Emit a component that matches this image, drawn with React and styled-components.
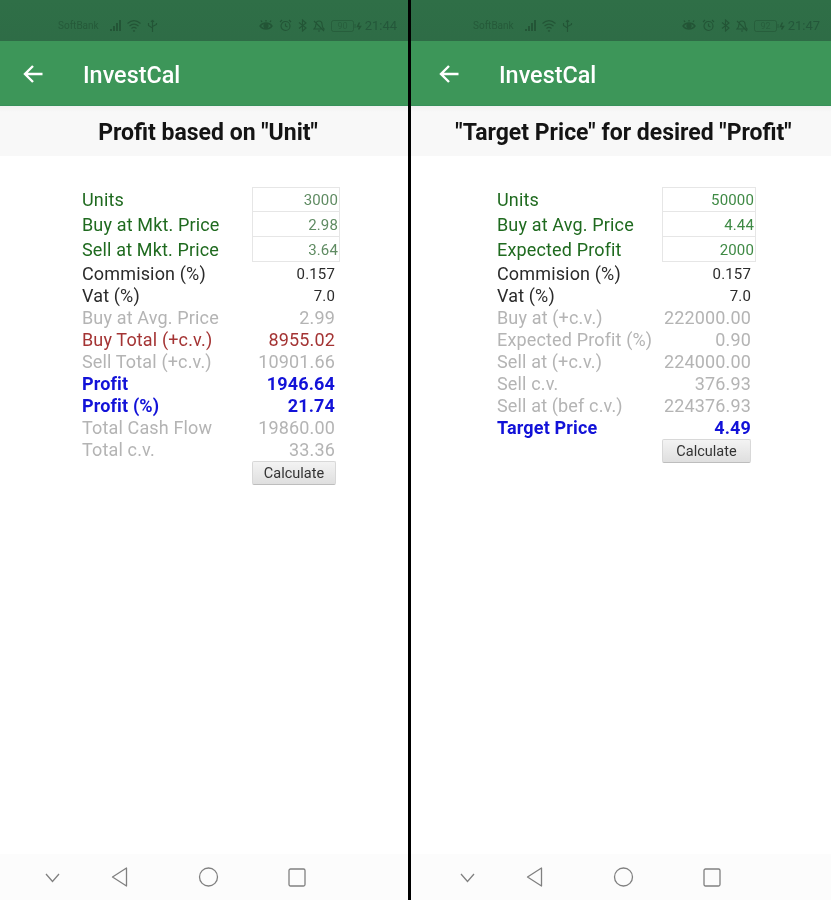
import React from "react";
import styled, { createGlobalStyle } from "styled-components";

const GlobalStyle = createGlobalStyle`
  html, body {
    margin: 0;
    padding: 0;
    height: 100%;
    background: #000;
    font-family: Roboto, "Liberation Sans", sans-serif;
  }
`;

const tones = {
  green: "#1f6a1f",
  black: "#2b2b2b",
  grey: "#b4b4b4",
  red: "#a43434",
  blue: "#1212d8",
};

const screens = [
  {
    width: 408,
    indent: 82,
    statusPad: 58,
    barPad: 23,
    navPad: 45,
    titleShift: 8,
    signal: "SoftBank",
    time: "21:44",
    battery: "90",
    title: 'Profit based on "Unit"',
    labelCol: 170,
    inputCol: 88,
    buttonInset: 4,
    inputColor: "#5f8b62",
    rows: [
      { label: "Units", value: "3000", input: true },
      { label: "Buy at Mkt. Price", value: "2.98", input: true },
      { label: "Sell at Mkt. Price", value: "3.64", input: true },
      { label: "Commision (%)", value: "0.157", tone: "black", small: true },
      { label: "Vat (%)", value: "7.0", tone: "black", small: true },
      { label: "Buy at Avg. Price", value: "2.99", tone: "grey" },
      { label: "Buy Total (+c.v.)", value: "8955.02", tone: "red" },
      { label: "Sell Total (+c.v.)", value: "10901.66", tone: "grey" },
      { label: "Profit", value: "1946.64", tone: "blue", bold: true },
      { label: "Profit (%)", value: "21.74", tone: "blue", bold: true },
      { label: "Total Cash Flow", value: "19860.00", tone: "grey" },
      { label: "Total c.v.", value: "33.36", tone: "grey" },
    ],
  },
  {
    width: 420,
    indent: 86,
    statusPad: 62,
    barPad: 28,
    navPad: 49,
    titleShift: 5,
    signal: "SoftBank",
    time: "21:47",
    battery: "92",
    title: '"Target Price" for desired "Profit"',
    labelCol: 165,
    inputCol: 94,
    buttonInset: 5,
    inputColor: "#3f8a45",
    rows: [
      { label: "Units", value: "50000", input: true },
      { label: "Buy at Avg. Price", value: "4.44", input: true },
      { label: "Expected Profit", value: "2000", input: true },
      { label: "Commision (%)", value: "0.157", tone: "black", small: true },
      { label: "Vat (%)", value: "7.0", tone: "black", small: true },
      { label: "Buy at (+c.v.)", value: "222000.00", tone: "grey" },
      { label: "Expected Profit (%)", value: "0.90", tone: "grey" },
      { label: "Sell at (+c.v.)", value: "224000.00", tone: "grey" },
      { label: "Sell c.v.", value: "376.93", tone: "grey" },
      { label: "Sell at (bef c.v.)", value: "224376.93", tone: "grey" },
      { label: "Target Price", value: "4.49", tone: "blue", bold: true },
    ],
  },
];

const Page = styled.div`
  display: flex;
  justify-content: space-between;
  height: 900px;
  width: 831px;
  overflow: hidden;
  background: #000;
  filter: blur(0.4px);
`;

const Screen = styled.section`
  width: ${(p) => p.$width}px;
  height: 100%;
  display: flex;
  flex-direction: column;
  background: #fff;
`;

const StatusBar = styled.div`
  height: 41px;
  flex: none;
  box-sizing: border-box;
  padding: 10px 11px 0 ${(p) => p.$pad}px;
  display: flex;
  align-items: center;
  background: linear-gradient(#2f6f47, #2e6c46);
  color: #235536;
`;

const Carrier = styled.span`
  font-size: 10px;
  width: 52px;
  opacity: 0.8;
`;

const StatusGroup = styled.div`
  display: flex;
  align-items: center;
  gap: 6px;
`;

const Spacer = styled.div`
  flex: 1;
`;

const Clock = styled.span`
  font-size: 13px;
  margin-left: 2px;
  color: #24573a;
`;

const AppBar = styled.header`
  height: 65px;
  flex: none;
  box-sizing: border-box;
  padding: 2px 0 0 ${(p) => p.$pad}px;
  display: flex;
  align-items: center;
  gap: 40px;
  background: #3d9659;
  border-bottom: 1px solid #37905a;
  color: #fff;
`;

const AppTitle = styled.h1`
  margin: 2px 0 0;
  font-size: 23.4px;
  font-weight: 500;
`;

const TitleBand = styled.h2`
  margin: 0;
  height: 50px;
  flex: none;
  box-sizing: border-box;
  padding: 2px 0 0 ${(p) => p.$shift}px;
  display: flex;
  align-items: center;
  justify-content: center;
  background: linear-gradient(#f1f1f1, #f8f8f8 12%);
  color: #141414;
  font-size: 23px;
  font-weight: 700;
`;

const Form = styled.div`
  padding: 31px 0 0 ${(p) => p.$indent}px;
  display: grid;
  grid-template-columns: ${(p) => p.$labelCol}px ${(p) => p.$inputCol}px;
  font-size: 18px;
  letter-spacing: 0.15px;
`;

const Label = styled.div`
  display: flex;
  align-items: center;
  white-space: nowrap;
  height: ${(p) => (p.$input ? 25 : 22)}px;
  color: ${(p) => tones[p.$tone]};
  font-weight: ${(p) => (p.$bold ? 700 : 400)};
`;

const Value = styled.div`
  display: flex;
  align-items: center;
  justify-content: flex-end;
  height: 22px;
  box-sizing: border-box;
  padding: ${(p) => (p.$small ? "2px 5px 0 0" : "0 5px 0 0")};
  color: ${(p) => tones[p.$tone]};
  font-size: ${(p) => (p.$small ? 15 : 18)}px;
  font-weight: ${(p) => (p.$bold ? 700 : 400)};
`;

const InputBox = styled.div`
  height: 25px;
  box-sizing: border-box;
  display: flex;
  align-items: center;
  justify-content: flex-end;
  padding: 1px 1px 0 0;
  border: 1px solid #e6e6e6;
  border-top-width: ${(p) => (p.$first ? 1 : 0)}px;
  background: #fff;
  color: ${(p) => p.$color};
  font-size: 15px;
`;

const CalcCell = styled.div`
  grid-column: 2;
  padding: 1px ${(p) => p.$inset}px 0 0;
`;

const CalcButton = styled.button`
  display: block;
  width: 100%;
  height: 24px;
  padding: 0;
  border: 1px solid #d8d8d8;
  border-bottom-color: #bdbdbd;
  border-radius: 2px;
  background: linear-gradient(#f3f3f3, #dfdfdf);
  color: #333;
  font-family: inherit;
  font-size: 14.5px;
`;

const NavBar = styled.nav`
  margin-top: auto;
  height: 46px;
  flex: none;
  box-sizing: border-box;
  display: flex;
  align-items: flex-start;
  padding: 13px 0 0 ${(p) => p.$pad}px;
  background: #fcfcfc;
`;

const NavSlot = styled.div`
  display: flex;
  justify-content: center;
  width: ${(p) => p.$w}px;
  margin-right: ${(p) => p.$gap}px;
  padding-top: ${(p) => p.$top || 0}px;
`;

const BackArrow = () => (
  <svg width="20" height="20" viewBox="0 0 20 20" fill="none" stroke="#fff" strokeWidth="2.4">
    <path d="M19.5 10H2M10 2l-8 8 8 8" />
  </svg>
);

const Signal = () => (
  <svg width="11" height="12" viewBox="0 0 11 12" fill="currentColor">
    <rect x="0" y="9" width="2" height="2" />
    <rect x="3" y="6" width="2" height="5" />
    <rect x="6" y="3" width="2" height="8" />
    <rect x="9" y="0" width="2" height="11" />
  </svg>
);

const Wifi = () => (
  <svg width="14" height="12" viewBox="0 0 14 12" fill="none" stroke="currentColor" strokeWidth="1.1">
    <path d="M.5 3.5c4-3.5 9-3.5 13 0M2.5 6c3-2.5 6-2.5 9 0M4.5 8.5c1.700-1.500 3.300-1.500 5 0M6.200 10.500l.8.800.8-.8" />
  </svg>
);

const Usb = () => (
  <svg width="11" height="14" viewBox="0 0 11 14" fill="none" stroke="currentColor" strokeWidth="1.1">
    <path d="M5.500 1v12M5.500 1 4 3M5.500 1 7 3M1.500 4v2.500l4 2.500M9.500 4v1.500l-4 2" />
  </svg>
);

const Eye = () => (
  <svg width="14" height="12" viewBox="0 0 14 12" fill="none" stroke="currentColor" strokeWidth="1.3">
    <path d="M1 6c3-4 9-4 12 0-3 4-9 4-12 0Z" />
    <circle cx="7" cy="6" r="2" fill="currentColor" />
    <path d="M3 2 2 .5M11 2l1-1.500M7 1.500V0" />
  </svg>
);

const Alarm = () => (
  <svg width="13" height="13" viewBox="0 0 13 13" fill="none" stroke="currentColor" strokeWidth="1.1">
    <circle cx="6.500" cy="7" r="4.500" />
    <path d="M6.500 4.500V7l2 1M1 3l2-2M12 3l-2-2" />
  </svg>
);

const Bluetooth = () => (
  <svg width="9" height="13" viewBox="0 0 9 13" fill="none" stroke="currentColor" strokeWidth="1.1">
    <path d="M1 3.500l7 5.500-3.500 3V1L8 4 1 9.500" />
  </svg>
);

const BellOff = () => (
  <svg width="12" height="12" viewBox="0 0 12 12" fill="none" stroke="currentColor" strokeWidth="1.1">
    <path d="M3 4c0-4 6-4 6 0 0 3 1 4 2 5H1c1-1 2-2 2-5ZM5 11h2M1 1l10 10" />
  </svg>
);

const Battery = ({ level }) => (
  <svg width="32" height="12" viewBox="0 0 32 12" fill="none" stroke="currentColor" strokeWidth="1">
    <rect x="0.500" y="0.500" width="22" height="11" rx="2" opacity="0.6" />
    <path d="M24 4v4" opacity="0.7" />
    <text x="11.500" y="9" fontSize="9" textAnchor="middle" fill="currentColor" stroke="none" opacity="0.6">
      {level}
    </text>
    <path d="M28.500 2.500 26.500 6.500h3L27.500 9.500" strokeWidth="1.400" />
  </svg>
);

const NavChevron = () => (
  <svg width="15" height="10" viewBox="0 0 15 10" fill="none" stroke="#808080" strokeWidth="1.300">
    <path d="M1 1l6.500 7.500L14 1" />
  </svg>
);

const NavBack = () => (
  <svg width="17" height="20" viewBox="0 0 17 20" fill="none" stroke="#808080" strokeWidth="1.300">
    <path d="M15.500 1v18L1.500 10Z" strokeLinejoin="round" />
  </svg>
);

const NavHome = () => (
  <svg width="21" height="20" viewBox="0 0 21 20" fill="none" stroke="#808080" strokeWidth="1.300">
    <circle cx="10.500" cy="10" r="9" />
  </svg>
);

const NavRecent = () => (
  <svg width="18" height="19" viewBox="0 0 18 19" fill="none" stroke="#808080" strokeWidth="1.300">
    <rect x="1" y="1" width="16" height="17" rx="1.500" />
  </svg>
);

const Phone = ({ data }) => (
  <Screen $width={data.width}>
    <StatusBar $pad={data.statusPad}>
      <Carrier>{data.signal}</Carrier>
      <StatusGroup>
        <Signal />
        <Wifi />
        <Usb />
      </StatusGroup>
      <Spacer />
      <StatusGroup>
        <Eye />
        <Alarm />
        <Bluetooth />
        <BellOff />
        <Battery level={data.battery} />
      </StatusGroup>
      <Clock>{data.time}</Clock>
    </StatusBar>
    <AppBar $pad={data.barPad}>
      <BackArrow />
      <AppTitle>InvestCal</AppTitle>
    </AppBar>
    <TitleBand $shift={data.titleShift}>{data.title}</TitleBand>
    <Form $indent={data.indent} $labelCol={data.labelCol} $inputCol={data.inputCol}>
      {data.rows.map((row, i) => (
        <React.Fragment key={row.label}>
          <Label $input={row.input} $tone={row.tone || "green"} $bold={row.bold}>
            {row.label}
          </Label>
          {row.input ? (
            <InputBox $first={i === 0} $color={data.inputColor}>
              {row.value}
            </InputBox>
          ) : (
            <Value $tone={row.tone} $small={row.small} $bold={row.bold}>
              {row.value}
            </Value>
          )}
        </React.Fragment>
      ))}
      <CalcCell $inset={data.buttonInset}>
        <CalcButton>Calculate</CalcButton>
      </CalcCell>
    </Form>
    <NavBar $pad={data.navPad}>
      <NavSlot $w={15} $gap={51} $top={6}>
        <NavChevron />
      </NavSlot>
      <NavSlot $w={17} $gap={70}>
        <NavBack />
      </NavSlot>
      <NavSlot $w={21} $gap={69}>
        <NavHome />
      </NavSlot>
      <NavSlot $w={18} $gap={0} $top={1}>
        <NavRecent />
      </NavSlot>
    </NavBar>
  </Screen>
);

const App = () => (
  <>
    <GlobalStyle />
    <Page>
      {screens.map((s) => (
        <Phone key={s.time} data={s} />
      ))}
    </Page>
  </>
);

export default App;
